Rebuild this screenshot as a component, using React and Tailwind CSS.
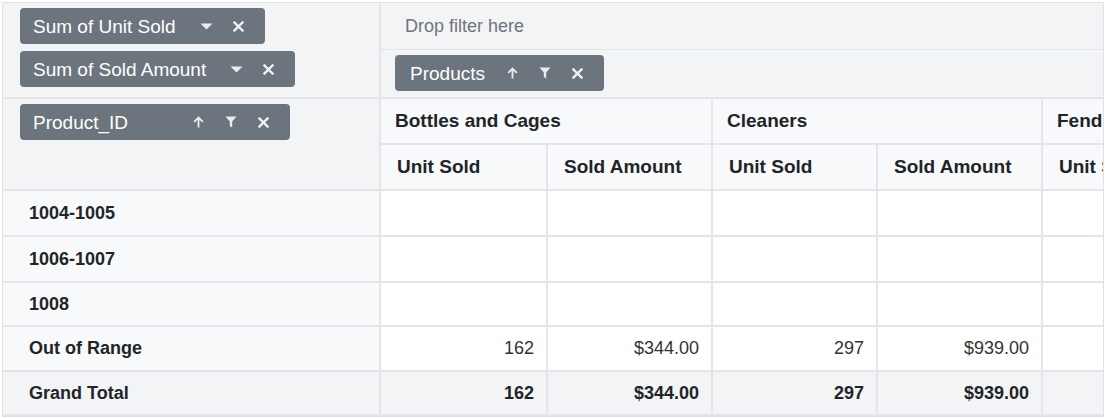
import React from "react";

const CaretDown = () => (
  <svg width="13" height="7" viewBox="0 0 13 7" className="text-[#e9ecef]">
    <path d="M0.5 0.5h12L6.5 6.5z" fill="currentColor" />
  </svg>
);

const Close = () => (
  <svg width="11" height="11" viewBox="0 0 11 11" className="text-[#f1f3f5]">
    <path d="M1.5 1.5l8 8M9.5 1.5l-8 8" stroke="currentColor" strokeWidth="2.4" strokeLinecap="square" />
  </svg>
);

const ArrowUp = () => (
  <svg width="11" height="12" viewBox="0 0 11 12" className="text-[#e9ecef]">
    <path d="M5.5 11.5V1.5M1.2 5.8l4.3-4.3 4.3 4.3" stroke="currentColor" strokeWidth="1.8" fill="none" />
  </svg>
);

const Funnel = () => (
  <svg width="12" height="12" viewBox="0 0 12 12" className="text-[#e9ecef]">
    <path d="M0.5 0.5h11L7.2 5.6v5.9L4.8 10V5.6z" fill="currentColor" />
  </svg>
);

const Pill = ({ label, width, children, padLeft = "pl-[13px]" }) => (
  <div
    className={`h-9 ${width} ${padLeft} pr-[21px] rounded bg-[#6c757d] text-white text-[19px] flex items-center justify-between`}
  >
    <span className="leading-none">{label}</span>
    <div className="flex items-center">{children}</div>
  </div>
);

const measures = ["Unit Sold", "Sold Amount"];
const categories = ["Bottles and Cages", "Cleaners", "Fenders"];

const rows = [
  { id: "1004-1005", h: "h-[46px]", values: ["", "", "", "", "", ""] },
  { id: "1006-1007", h: "h-[46px]", values: ["", "", "", "", "", ""] },
  { id: "1008", h: "h-[44px]", values: ["", "", "", "", "", ""] },
  { id: "Out of Range", h: "h-[45px]", values: ["162", "$344.00", "297", "$939.00", "", ""] },
];

const total = ["162", "$344.00", "297", "$939.00", "", ""];

const line = "border-[#e3e5e9]";

export default function App() {
  return (
    <div className="h-[418px] overflow-hidden bg-white pt-[2px] pl-[2px] font-['Liberation_Sans',Arial,sans-serif]">
      <div className="w-[1102px] border border-[#dee2e6] overflow-hidden">
        {/* grouping bar */}
        <div className={`flex border-b-2 ${line}`}>
          <div className={`w-[378px] shrink-0 h-[94px] border-r-2 ${line} bg-[#f3f4f6] pl-[17px] pt-[5px] flex flex-col items-start gap-[7px]`}>
            <Pill label="Sum of Unit Sold" width="w-[245px]">
              <div className="flex items-center gap-[20px]">
                <CaretDown />
                <Close />
              </div>
            </Pill>
            <Pill label="Sum of Sold Amount" width="w-[275px]">
              <div className="flex items-center gap-[20px]">
                <CaretDown />
                <Close />
              </div>
            </Pill>
          </div>
          <div className="flex-1 bg-[#f3f4f6] flex flex-col">
            <div className="h-[47px] border-b border-[#e0e3e7] flex items-center pl-[24px] text-[18px] text-[#6c757d]">
              Drop filter here
            </div>
            <div className="pl-[14px] pt-[5px]">
              <Pill label="Products" width="w-[209px]" padLeft="pl-[15px]">
                <div className="flex items-center gap-[21px]">
                  <ArrowUp />
                  <Funnel />
                  <Close />
                </div>
              </Pill>
            </div>
          </div>
        </div>

        {/* pivot table */}
        <div className="grid grid-cols-[378px_167px_165px_165px_165px_165px_165px] w-max">
          <div className={`row-span-2 border-r-2 border-b-2 ${line} bg-[#f3f4f6] pl-[17px] pt-[5px]`}>
            <Pill label="Product_ID" width="w-[270px]">
              <div className="flex items-center gap-[21px]">
                <ArrowUp />
                <Funnel />
                <Close />
              </div>
            </Pill>
          </div>
          {categories.map((c) => (
            <div
              key={c}
              className={`col-span-2 h-[46px] border-r-2 border-b-2 ${line} bg-[#f8f9fa] flex items-center pl-[14px] text-[19px] font-bold text-[#212529] whitespace-nowrap`}
            >
              {c}
            </div>
          ))}
          {categories.map((c) =>
            measures.map((m) => (
              <div
                key={c + m}
                className={`h-[46px] border-r-2 border-b-2 ${line} bg-[#f8f9fa] flex items-center pl-[16px] text-[19px] font-bold text-[#212529] whitespace-nowrap`}
              >
                {m}
              </div>
            ))
          )}

          {rows.map((r) => (
            <React.Fragment key={r.id}>
              <div className={`${r.h} border-r-2 border-b-2 ${line} bg-[#f8f9fa] flex items-center pl-[26px] text-[18px] font-bold text-[#212529]`}>
                {r.id}
              </div>
              {r.values.map((v, i) => (
                <div
                  key={i}
                  className={`${r.h} border-r-2 border-b-2 ${line} bg-white flex items-center justify-end pr-3 text-[18px] text-[#333333]`}
                >
                  {v}
                </div>
              ))}
            </React.Fragment>
          ))}

          <div className={`h-[44px] border-r-2 border-b-2 ${line} bg-[#f3f4f6] flex items-center pl-[26px] text-[18px] font-bold text-[#212529]`}>
            Grand Total
          </div>
          {total.map((v, i) => (
            <div
              key={i}
              className={`h-[44px] border-r-2 border-b-2 ${line} bg-[#f3f4f6] flex items-center justify-end pr-3 text-[18px] font-bold text-[#212529]`}
            >
              {v}
            </div>
          ))}
        </div>
      </div>
    </div>
  );
}
